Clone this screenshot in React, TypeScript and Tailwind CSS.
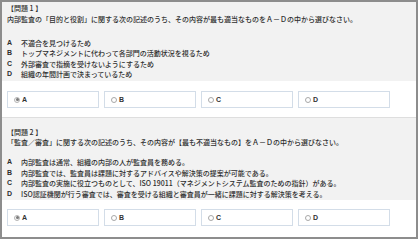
import React from "react";

const font = { fontFamily: '"Noto Sans CJK JP", "Noto Sans", sans-serif' };

function Radio({ checked }: { checked: boolean }) {
  return checked ? (
    <span className="w-[6px] h-[6px] rounded-full border border-[#b5b5b5] bg-[#f5f5f5] flex items-center justify-center shrink-0">
      <span className="w-[3px] h-[3px] rounded-full bg-[#7a7a7a]" />
    </span>
  ) : (
    <span className="w-[6px] h-[6px] rounded-full border border-[#a8a8a8] bg-white shrink-0" />
  );
}

function Choices({ selected }: { selected: string }) {
  return (
    <div className="flex gap-[5px]">
      {["A", "B", "C", "D"].map((l) => (
        <div
          key={l}
          className="w-[92px] h-[17px] border border-[#d3dde8] bg-white flex items-center pl-[6px] gap-[2px]"
        >
          <Radio checked={l === selected} />
          <span className="text-[7px] leading-none font-bold text-[#333] font-['Liberation_Sans',sans-serif]">
            {l}
          </span>
        </div>
      ))}
    </div>
  );
}

function Options({ items }: { items: [string, string][] }) {
  return (
    <div className="flex flex-col">
      {items.map(([l, t]) => (
        <div key={l} className="flex h-[10.5px] items-center">
          <span className="w-[14px] shrink-0 font-bold font-['Liberation_Sans',sans-serif]">{l}</span>
          <span className="whitespace-nowrap">{t}</span>
        </div>
      ))}
    </div>
  );
}

export default function App() {
  return (
    <div className="w-[420px] h-[241px] bg-white">
      <div
        className="w-[418px] h-[239px] border-2 border-[#8d8d8d] flex flex-col text-[7px] leading-[10.5px] text-[#2e2e2e] font-medium"
        style={font}
      >
        <div className="h-[79px] shrink-0 bg-[#f2f2f2] px-[5px] pt-[1px] flex flex-col">
          <div className="whitespace-nowrap">【問題 1 】</div>
          <div className="whitespace-nowrap">
            内部監査の「目的と役割」に関する次の記述のうち、その内容が最も適当なものをＡ－Ｄの中から選びなさい。
          </div>
          <div className="mt-[13.5px]">
            <Options
              items={[
                ["A", "不適合を見つけるため"],
                ["B", "トップマネジメントに代わって各部門の活動状況を視るため"],
                ["C", "外部審査で指摘を受けないようにするため"],
                ["D", "組織の年間計画で決まっているため"],
              ]}
            />
          </div>
        </div>
        <div className="h-[37px] shrink-0 bg-white px-[5px] pt-[10px] border-b border-[#dedede]">
          <Choices selected="A" />
        </div>
        <div className="h-[82px] shrink-0 bg-[#f2f2f2] px-[5px] pt-[8.5px] flex flex-col">
          <div className="whitespace-nowrap">【問題 2 】</div>
          <div className="whitespace-nowrap">
            「監査／審査」に関する次の記述のうち、その内容が【最も不適当なもの】をＡ－Ｄの中から選びなさい。
          </div>
          <div className="mt-[9.5px]">
            <Options
              items={[
                ["A", "内部監査は通常、組織の内部の人が監査員を務める。"],
                ["B", "内部監査では、監査員は課題に対するアドバイスや解決策の提案が可能である。"],
                ["C", "内部監査の実施に役立つものとして、ISO 19011（マネジメントシステム監査のための指針）がある。"],
                ["D", "ISO認証機関が行う審査では、審査を受ける組織と審査員が一緒に課題に対する解決策を考える。"],
              ]}
            />
          </div>
        </div>
        <div className="flex-1 bg-white px-[5px] pt-[9px]">
          <Choices selected="A" />
        </div>
      </div>
    </div>
  );
}
